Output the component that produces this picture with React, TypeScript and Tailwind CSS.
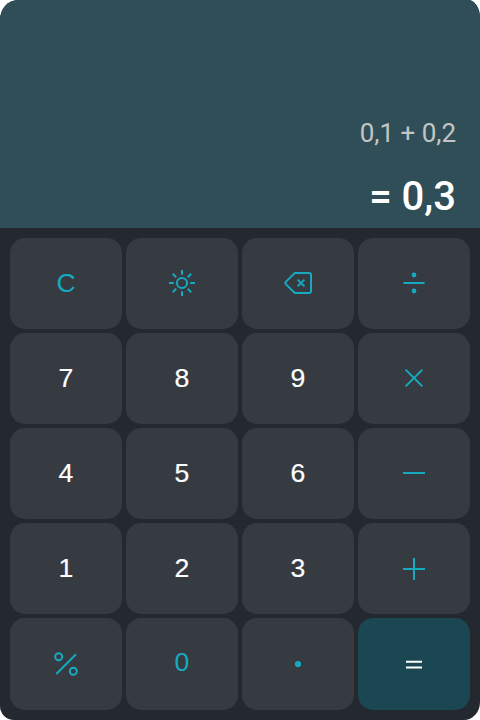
import type { ReactNode } from 'react';

function Icon({ children }: { children: ReactNode }) {
  return (
    <svg
      width="32"
      height="32"
      viewBox="0 0 32 32"
      fill="none"
      stroke="currentColor"
      strokeWidth="2"
      strokeLinecap="butt"
    >
      {children}
    </svg>
  );
}

const sun = (
  <Icon>
    <circle cx="16" cy="15" r="5.1" />
    <path d="M16 2v4.8M16 23.2V28M3 15h4.8M24.2 15H29M6.8 5.8l3.4 3.4M21.8 20.8l3.4 3.4M25.2 5.8l-3.4 3.4M10.2 20.8l-3.4 3.4" />
  </Icon>
);

const backspace = (
  <Icon>
    <path
      d="M12.8 5H27a2 2 0 0 1 2 2v16a2 2 0 0 1-2 2H12.8L4 16.4Q2.7 15 4 13.6Z"
      strokeLinejoin="round"
    />
    <path d="M15.6 11.6l6.8 6.8M22.4 11.6l-6.8 6.8" />
  </Icon>
);

const divide = (
  <Icon>
    <path d="M5.5 15h21" />
    <circle cx="16" cy="7" r="2.4" fill="currentColor" stroke="none" />
    <circle cx="16" cy="23" r="2.4" fill="currentColor" stroke="none" />
  </Icon>
);

const times = (
  <Icon>
    <path d="M7.6 6.6l16.8 16.8M24.4 6.6L7.6 23.4" />
  </Icon>
);

const minus = (
  <Icon>
    <path d="M5 15h22" />
  </Icon>
);

const plus = (
  <Icon>
    <path d="M5 16h22M16 5v22" />
  </Icon>
);

const percent = (
  <Icon>
    <path d="M6.3 26L26 6.3" />
    <circle cx="8.7" cy="8.7" r="3.5" />
    <circle cx="23.3" cy="23.3" r="3.5" />
  </Icon>
);

const point = (
  <Icon>
    <circle cx="16" cy="16" r="3.1" fill="currentColor" stroke="none" />
  </Icon>
);

const equals = (
  <Icon>
    <path d="M8 13.7h16M8 19.6h16" />
  </Icon>
);

type Key = { label: string; icon?: ReactNode; tone?: 'accent' | 'equals' | 'zero' };

const keys: Key[] = [
  { label: 'C', tone: 'accent' },
  { label: 'Theme', icon: sun, tone: 'accent' },
  { label: 'Delete', icon: backspace, tone: 'accent' },
  { label: 'Divide', icon: divide, tone: 'accent' },
  { label: '7' },
  { label: '8' },
  { label: '9' },
  { label: 'Multiply', icon: times, tone: 'accent' },
  { label: '4' },
  { label: '5' },
  { label: '6' },
  { label: 'Subtract', icon: minus, tone: 'accent' },
  { label: '1' },
  { label: '2' },
  { label: '3' },
  { label: 'Add', icon: plus, tone: 'accent' },
  { label: 'Percent', icon: percent, tone: 'accent' },
  { label: '0', tone: 'zero' },
  { label: 'Decimal point', icon: point, tone: 'accent' },
  { label: 'Equals', icon: equals, tone: 'equals' },
];

const tones = {
  digit: 'bg-[#363a41] text-white [-webkit-text-stroke:0.2px_white]',
  accent: 'bg-[#363a41] text-[#17a9c0]',
  zero: 'bg-[#363a41] pb-0.5 text-[#17a9c0]',
  equals: 'bg-[#1a4751] text-white',
};

export default function App() {
  return (
    <div className="h-[720px] w-[480px] bg-white">
      <main className="flex h-full flex-col overflow-hidden rounded-[18px_12px_16px_14px/20px_18px_18px_14px] bg-[#23292e]">
        <section className="flex h-[228px] flex-col items-end justify-end bg-[#304e58] pr-6 pb-[7px] font-[Roboto,sans-serif]">
          <p className="text-[26px] leading-[36px] text-[#c3c5c4]">0,1 + 0,2</p>
          <p className="mt-[22px] text-[40px] leading-[48px] font-medium text-white">= 0,3</p>
        </section>
        <section className="grid flex-1 grid-cols-4 grid-rows-[91px_91px_91px_91px_92px] gap-1 p-2.5 font-['Liberation_Sans',Arial,sans-serif] text-[26.6px]">
          {keys.map((key) => (
            <button
              key={key.label}
              aria-label={key.label}
              className={`flex items-center justify-center rounded-[15px] ${tones[key.tone ?? 'digit']}`}
            >
              {key.icon ?? key.label}
            </button>
          ))}
        </section>
      </main>
    </div>
  );
}
